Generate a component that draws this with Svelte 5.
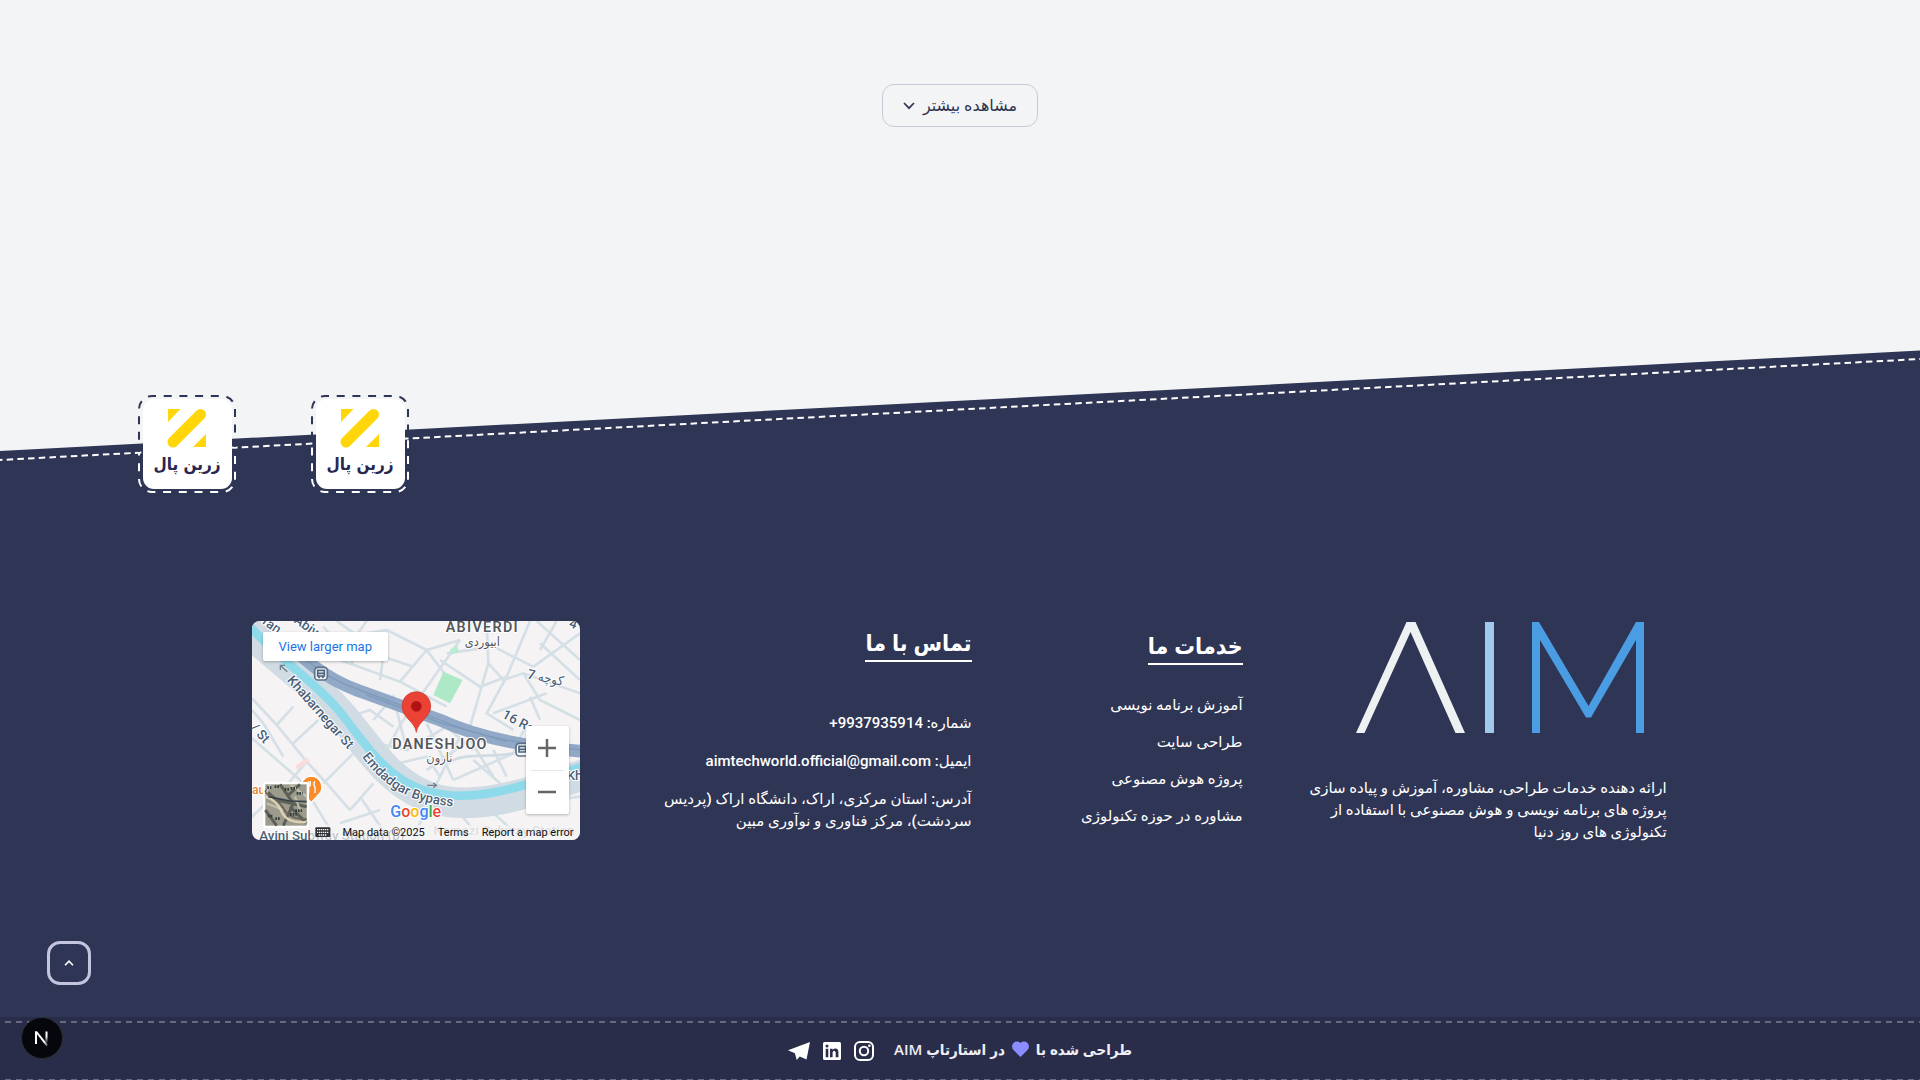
<script>
  const services = ['آموزش برنامه نویسی', 'طراحی سایت', 'پروژه هوش مصنوعی', 'مشاوره در حوزه تکنولوژی'];
  const badges = [
    { id: 'first', above: 'M-2 -2H100V52L-2 57Z', below: 'M-2 57L100 52V100H-2Z' },
    { id: 'second', above: 'M-2 -2H100V41L-2 46Z', below: 'M-2 46L100 41V100H-2Z' }
  ];
</script>

<div class="page" dir="rtl" lang="fa">
  <main>
    <button class="more">
      <span>مشاهده بیشتر</span>
      <svg width="12" height="8" viewBox="0 0 12 8" aria-hidden="true"><path d="M1 1l5 5.2L11 1" fill="none" stroke="#2f3554" stroke-width="1.7" /></svg>
    </button>
  </main>

  <footer>
    <svg class="slope" viewBox="0 0 1920 112" preserveAspectRatio="none" aria-hidden="true">
      <path d="M0 101L1920 .5V112H0Z" fill="#2f3554" />
      <path d="M0 110L1920 9" stroke="#fff" stroke-width="2" stroke-dasharray="6.500 4.200" stroke-dashoffset="4" />
    </svg>

    <div class="badges" dir="ltr">
      {#each badges as badge (badge.id)}
        <a class="badge" href="#zarinpal" aria-label="زرین پال">
          <svg viewBox="0 0 98 98" width="98" height="98">
            <clipPath id="above-{badge.id}"><path d={badge.above} /></clipPath>
            <clipPath id="below-{badge.id}"><path d={badge.below} /></clipPath>
            <rect class="stitch dark" x="1" y="1" width="96" height="96" rx="13" clip-path="url(#above-{badge.id})" />
            <rect class="stitch" x="1" y="1" width="96" height="96" rx="13" clip-path="url(#below-{badge.id})" />
            <rect x="5" y="4" width="89" height="90" rx="11" fill="#fff" />
            <g fill="#ffd60a">
              <path d="M30 14h12.500L30 27Z" />
              <path d="M68 39v13H55Z" />
            </g>
            <path d="M35 47L62.500 19.500" stroke="#ffd60a" stroke-width="11" stroke-linecap="round" />
            <text class="brand" x="49" y="75" text-anchor="middle">زرین پال</text>
          </svg>
        </a>
      {/each}
    </div>

    <div class="columns">
      <section class="about">
        <svg class="logo" viewBox="0 0 288 111" role="img" aria-label="AIM">
          <path d="M0 111L50.500 0H59.500L109 111H99.500L54.500 10L8.500 111Z" fill="#eef1f2" />
          <path d="M129 0h9v111h-9Z" fill="#9fcaec" />
          <path d="M176 111V0h7l49.500 84L280 0h8v111h-8V18L235 95.500h-5L184 18v93Z" fill="#4a9de3" />
        </svg>
        <p>ارائه دهنده خدمات طراحی، مشاوره، آموزش و پیاده سازی<br />پروژه های برنامه نویسی و هوش مصنوعی با استفاده از<br />تکنولوژی های روز دنیا</p>
      </section>

      <section class="services">
        <h2>خدمات ما</h2>
        <ul>
          {#each services as service}
            <li><a href="#services">{service}</a></li>
          {/each}
        </ul>
      </section>

      <section class="contact">
        <h2>تماس با ما</h2>
        <address>
          <p>شماره: 9937935914+</p>
          <p>ایمیل: aimtechworld.official@gmail.com</p>
          <p>آدرس: استان مرکزی، اراک، دانشگاه اراک (پردیس<br />سردشت)، مرکز فناوری و نوآوری مبین</p>
        </address>
      </section>

      <section class="map" dir="ltr" aria-label="Map">
        <svg class="tiles" viewBox="36 33 984 657" preserveAspectRatio="xMidYMid slice">
          <defs>
            <path id="khabarnegar" d="M140 212Q230 315 345 442" />
            <path id="emdadgar" d="M366 440C440 540 520 590 700 592" />
          </defs>
          <rect x="36" y="33" width="984" height="657" fill="#f5f3f4" />
          <g fill="none" stroke="#d5dfe6" stroke-width="8">
            <path d="M36 265L110 345 200 455 260 520 330 600M36 385L180 510 290 690M200 455L120 550 90 590M110 345L160 290M36 300L70 340 130 440M160 400L235 330M250 520L360 410M330 600L400 520M36 620L100 560M360 560L450 690M300 640L420 600" />
            <path d="M290 33L350 75 440 60 560 120 660 90M350 75L300 150 240 130M440 60L420 210M300 150L480 215 560 120M250 50L340 160M380 33L350 75 400 130 520 170M560 120L620 200" />
            <path d="M660 90L480 345 440 420M600 150L720 230 800 200 870 33M740 33L745 160 790 210 850 190 1020 250M620 130L760 110 880 170M745 160L690 350M800 200L740 310 820 360M850 190L900 270 1020 330M900 100L1020 210M890 33L1020 150M950 33L900 120M1020 70L880 170M480 215L620 290M760 310L920 250M900 330L870 260" />
            <path d="M300 270L240 330M400 330L460 260 500 420 410 400M460 350L390 300 330 320M500 420L620 350 700 420M560 340L640 510M640 510L820 430 860 340M560 480L690 390 760 500M700 450L780 520M430 470L560 440 600 500M660 380L580 540 520 690M800 500L760 420M860 580L1020 560M750 600L850 690M620 560L700 660" />
          </g>
          <path d="M580 255L610 185 668 210 630 280Z" fill="#aee9c7" />
          <path d="M630 118l22-10 5 18-24 8Z" fill="#b9ecd0" />
          <path d="M165 468l37-26 6 12-35 26Z" fill="#fbdcdc" />
          <g fill="none">
            <path d="M20 60C150 180 220 220 300 310S430 500 550 555 850 560 1040 490" stroke="#d0dbe3" stroke-width="92" />
            <path d="M20 40C140 170 220 210 295 300S430 500 550 540 800 550 1040 465" stroke="#8fdaea" stroke-width="26" />
            <path d="M130 80Q220 190 350 240L600 330Q760 405 1040 425" stroke="#91a9c6" stroke-width="38" />
            <path d="M200 150Q260 205 360 240L600 330Q780 405 1040 420M380 255L600 338 800 395" stroke="#7e9abb" stroke-width="4" />
            <path d="M625 460C670 425 740 445 820 430" stroke="#d0dbe3" stroke-width="8" />
          </g>
          <g fill="none" stroke="#6e7f8d" stroke-width="4">
            <path d="M142 185L122 167M121 180v-14h14M562 526h26M580 519l9 7-9 7" />
          </g>
          <g fill="#f4f8fb" stroke="#5d7187" stroke-width="5">
            <rect x="224" y="172" width="38" height="38" rx="10" />
            <rect x="828" y="400" width="38" height="38" rx="10" />
          </g>
          <g fill="none" stroke="#4c637d" stroke-width="5">
            <path d="M233 181h20v17h-20ZM233 190h20M236 204l4-6M250 204l-4-6M837 409h20v17h-20ZM837 418h20" />
          </g>
          <g class="street">
            <text><textPath href="#khabarnegar">Khabarnegar St</textPath></text>
            <text><textPath href="#emdadgar">Emdadgar Bypass</textPath></text>
            <text transform="translate(65 40) rotate(35)">ran...</text>
            <text transform="translate(160 36) rotate(35)">Abiv</text>
            <text transform="translate(30 355) rotate(48)">/ St</text>
            <text transform="translate(784 322) rotate(28)">16 Ro</text>
            <text transform="translate(860 205) rotate(12)">7 کوچه</text>
            <text transform="translate(985 50) rotate(20)">4</text>
            <text x="980" y="510">Kh</text>
            <text x="58" y="690">Avini Subway Station (p)</text>
            <text class="faded" x="580" y="676">Namazi Subway Station</text>
          </g>
          <g class="area" text-anchor="middle">
            <text x="727" y="67">ABIVERDI</text>
            <text class="fa" x="727" y="109">ابیوردی</text>
            <text x="600" y="417">DANESHJOO</text>
            <text class="fa" x="598" y="457">نارون</text>
          </g>
          <text class="food" x="36" y="553">au</text>
          <path d="M214 498a33 33 0 0 1 20 58L214 578 194 556A33 33 0 0 1 214 498Z" fill="#f98b2b" stroke="#fff" stroke-width="4" />
          <path d="M211 514v10q0 5-5 5v20M206 514v14M225 514q-7 8 0 17v18" fill="none" stroke="#fff" stroke-width="4" />
          <path d="M529 367C524 333 486 324 486 288a43 43 0 0 1 86 0C572 324 534 333 529 367Z" fill="#ea4335" stroke="#c5372c" stroke-width="2" />
          <circle cx="529" cy="289" r="16" fill="#b11313" />
          <rect x="210" y="645" width="810" height="45" fill="#f5f3f4" opacity=".7" />
          <rect x="69" y="516" width="138" height="138" rx="8" fill="#fff" />
          <rect x="76" y="523" width="124" height="124" fill="#9c9b8c" />
          <g fill="none">
            <path d="M76 540L110 570 200 590M120 523L160 580 130 647M180 523L140 560M76 600L110 647M150 590L200 640" stroke="#5c6058" stroke-width="9" />
            <path d="M90 523L76 560M150 523L200 560M80 580L130 600M165 560L180 600" stroke="#c4c1b1" stroke-width="6" />
            <path d="M76 560Q110 570 125 605T200 636" stroke="#ded2b4" stroke-width="7" />
            <path d="M76 548Q115 568 132 598T200 628" stroke="#6c675a" stroke-width="6" />
            <path d="M85 560L150 573 200 575" stroke="#36404a" stroke-width="5" />
            <path d="M82 533h12M104 530h14M134 538h14M170 550h18M84 618h16M106 626h15M150 613h20M166 602h20M152 535h18" stroke="#303b36" stroke-width="8" stroke-dasharray="5 3" />
          </g>
          <g class="google">
            <text x="451" y="620"><tspan fill="#4285f4">G</tspan><tspan fill="#ea4335">o</tspan><tspan fill="#fbbc05">o</tspan><tspan fill="#4285f4">g</tspan><tspan fill="#34a853">l</tspan><tspan fill="#ea4335">e</tspan></text>
          </g>
          <rect x="226" y="652" width="45" height="29" rx="3" fill="#303134" />
          <path d="M231 659h36M231 667h36M236 675h25" stroke="#f5f3f4" stroke-width="4" stroke-dasharray="4 2" />
        </svg>
        <a class="larger" href="#map">View larger map</a>
        <div class="zoom">
          <button aria-label="Zoom in"><svg width="18" height="18" viewBox="0 0 18 18"><path d="M0 9h18M9 0v18" stroke="#666" stroke-width="2.500" /></svg></button>
          <button aria-label="Zoom out"><svg width="18" height="18" viewBox="0 0 18 18"><path d="M0 9h18" stroke="#666" stroke-width="2.500" /></svg></button>
        </div>
        <div class="legal">
          <span>Map data ©2025</span>
          <a href="#terms">Terms</a>
          <a href="#report">Report a map error</a>
        </div>
      </section>
    </div>

    <div class="bar">
      <p>
        <span>طراحی شده با</span>
        <svg width="17" height="16" viewBox="0 0 17 16" aria-hidden="true"><path d="M8.500 16L1.500 9A4.800 4.800 0 0 1 8.500 2 4.800 4.800 0 0 1 15.500 9Z" fill="#8b8cff" /></svg>
        <span>در استارتاپ AIM</span>
      </p>
      <nav>
        <a href="#instagram" aria-label="Instagram">
          <svg width="20" height="20" viewBox="0 0 20 20"><rect x="1" y="1" width="18" height="18" rx="5" fill="none" stroke="#fff" stroke-width="2" /><circle cx="10" cy="10" r="4.200" fill="none" stroke="#fff" stroke-width="2" /><circle cx="15.300" cy="4.700" r="1.300" fill="#fff" /></svg>
        </a>
        <a href="#linkedin" aria-label="LinkedIn">
          <svg width="18" height="18" viewBox="0 0 18 18"><path fill="#fff" fill-rule="evenodd" d="M1.500 0h15Q18 0 18 1.500v15q0 1.500-1.500 1.500h-15Q0 18 0 16.500v-15Q0 0 1.500 0ZM2.700 6.800v8.500h2.600V6.800ZM4 2.600a1.500 1.500 0 1 0 0 3 1.500 1.500 0 0 0 0-3ZM7 6.800v8.500h2.600v-4.500c0-2.600 3.100-2.500 3.100 0v4.500h2.700V10c0-4-4-4.300-5.800-1.900V6.800Z" /></svg>
        </a>
        <a href="#telegram" aria-label="Telegram">
          <svg width="22" height="18" viewBox="0 0 22 18"><path fill="#fff" d="M22 0L18.500 17.500 11.800 14.500 8.700 18 6.900 11.300 0 8.300ZM7.500 11.200L18 3.200 9 12.600V15Z" fill-rule="nonzero" /></svg>
        </a>
      </nav>
    </div>
  </footer>

  <button class="to-top" aria-label="بازگشت به بالا">
    <svg width="10" height="6" viewBox="0 0 10 6"><path d="M1 5.200L5 1.200 9 5.200" fill="none" stroke="#fff" stroke-width="1.600" /></svg>
  </button>
  <button class="dev" aria-label="Next.js">
    <svg width="42" height="42" viewBox="0 0 42 42">
      <defs>
        <linearGradient id="stem" x1="0" y1="0" x2="0" y2="1"><stop offset=".4" stop-color="#fff" /><stop offset="1" stop-color="#fff" stop-opacity="0" /></linearGradient>
        <linearGradient id="slash" x1="0" y1="0" x2="1" y2="1"><stop offset=".7" stop-color="#fff" /><stop offset="1" stop-color="#fff" stop-opacity=".2" /></linearGradient>
      </defs>
      <circle cx="21" cy="21" r="20.500" fill="#06070c" stroke="#2b2c31" />
      <path d="M14 14.500h2v12.500h-2Z" fill="#fff" />
      <path d="M14 14.500h2.300L27 28l-1.700 1.200Z" fill="url(#slash)" />
      <path d="M24.500 14.500h2v12h-2Z" fill="url(#stem)" />
    </svg>
  </button>
</div>

<style>
  :global(body) {
    margin: 0;
    background: #f3f4f6;
  }
  .page {
    position: relative;
    display: flex;
    flex-direction: column;
    min-height: 100vh;
    overflow: hidden;
    color: #fff;
    font-family: Roboto, 'DejaVu Sans', sans-serif;
    font-size: 15px;
  }
  p, h2, ul {
    margin: 0;
    padding: 0;
  }
  a {
    color: inherit;
    text-decoration: none;
  }
  svg {
    display: block;
    flex: none;
  }
  button {
    padding: 0;
    border: 0;
    background: none;
    font: inherit;
    cursor: pointer;
  }
  main {
    display: flex;
    justify-content: center;
    padding: 84px 0 223px;
  }
  .more {
    display: flex;
    align-items: center;
    justify-content: center;
    gap: 8px;
    width: 156px;
    height: 43px;
    border: 1px solid #c9cad8;
    border-radius: 12px;
    color: #2f3554;
    font-size: 16px;
  }
  footer {
    position: relative;
    display: flex;
    flex: 1;
    flex-direction: column;
  }
  .slope {
    width: 100%;
    height: 112px;
  }
  .badges {
    position: absolute;
    top: 45px;
    left: 138px;
    display: flex;
    gap: 75px;
  }
  .stitch {
    fill: none;
    stroke: #fff;
    stroke-width: 2;
    stroke-dasharray: 8 7.700;
    stroke-dashoffset: 4;
  }
  .dark {
    stroke: #2f3554;
  }
  .brand {
    fill: #29264f;
    font: bold 17px 'DejaVu Sans Condensed', 'DejaVu Sans', sans-serif;
  }
  .columns {
    display: grid;
    flex: 1;
    grid-template-columns: 424fr 271fr 392fr 328fr;
    align-items: start;
    padding: 159px 13.200% 0 13.100%;
    background: #2f3554;
  }
  .about p {
    margin-top: 44px;
    line-height: 22px;
    white-space: nowrap;
  }
  .logo {
    width: 288px;
    height: 111px;
    margin: 1px 23px 0 0;
  }
  h2 {
    width: max-content;
    border-bottom: 2px solid #fff;
    font-family: 'Open Sans', 'DejaVu Sans Condensed', 'DejaVu Sans', sans-serif;
    font-size: 23px;
    font-weight: 700;
    line-height: 36px;
  }
  .services {
    padding-top: 6px;
  }
  .services ul {
    margin-top: 22px;
    line-height: 37px;
    list-style: none;
  }
  .contact {
    padding-top: 3px;
  }
  address {
    display: flex;
    flex-direction: column;
    gap: 16px;
    margin-top: 50px;
    font-style: normal;
    font-weight: 500;
    line-height: 22px;
    white-space: nowrap;
  }
  .map {
    position: relative;
    height: 219px;
    overflow: hidden;
    border-radius: 8px;
    font-family: Roboto, sans-serif;
  }
  .tiles {
    width: 100%;
    height: 100%;
  }
  .tiles text {
    paint-order: stroke;
    stroke: #fff;
    stroke-width: 6px;
    stroke-linejoin: round;
  }
  .street text {
    fill: #4b5f78;
    font: 500 40px Roboto, 'DejaVu Sans Condensed', sans-serif;
  }
  .street .faded {
    fill: #a4adb8;
  }
  .area text {
    fill: #54565b;
    font: 600 43px Roboto, sans-serif;
    letter-spacing: 4px;
  }
  .area .fa {
    font: 38px 'DejaVu Sans Condensed', 'DejaVu Sans', sans-serif;
    letter-spacing: 0;
  }
  .tiles .food {
    fill: #e8833a;
    font: 500 36px Roboto, sans-serif;
  }
  .google text {
    font: 500 48px Roboto, sans-serif;
  }
  .larger {
    position: absolute;
    top: 11px;
    left: 11px;
    padding: 0 16px;
    background: #fff;
    border-radius: 2px;
    box-shadow: 0 1px 3px #0004;
    color: #1a73e8;
    font-size: 13px;
    line-height: 29px;
  }
  .zoom {
    position: absolute;
    right: 11px;
    bottom: 26px;
    width: 43px;
    background: #fff;
    border-radius: 2px;
    box-shadow: 0 1px 3px #0004;
  }
  .zoom button {
    display: grid;
    place-items: center;
    width: 100%;
    height: 44px;
  }
  .zoom button + button {
    background: linear-gradient(#e6e6e6, #e6e6e6) top / 33px 1px no-repeat;
  }
  .legal {
    position: absolute;
    right: 6px;
    bottom: 0;
    display: flex;
    gap: 13px;
    color: #111;
    font-size: 11px;
    line-height: 15px;
    white-space: nowrap;
  }
  .bar {
    display: flex;
    align-items: center;
    justify-content: center;
    gap: 20px;
    height: 63px;
    background:
      repeating-linear-gradient(90deg, #686b80 0 6px, transparent 6px 11px) 5px 4px / 100% 2px no-repeat,
      repeating-linear-gradient(90deg, #686b80 0 6px, transparent 6px 11px) 5px 62px / 100% 2px no-repeat,
      #292d4a;
    color: #eeeef4;
  }
  .bar p {
    display: flex;
    align-items: center;
    gap: 7px;
    font-family: 'Open Sans', 'DejaVu Sans Condensed', 'DejaVu Sans', sans-serif;
    font-weight: 600;
  }
  .bar nav {
    display: flex;
    align-items: center;
    gap: 13px;
    padding-top: 4px;
  }
  .to-top {
    position: absolute;
    bottom: 95px;
    left: 47px;
    display: grid;
    place-items: center;
    width: 44px;
    height: 44px;
    border: 3px solid #c3c5df;
    border-radius: 13px;
  }
  .dev {
    position: absolute;
    bottom: 21px;
    left: 21px;
  }
</style>
